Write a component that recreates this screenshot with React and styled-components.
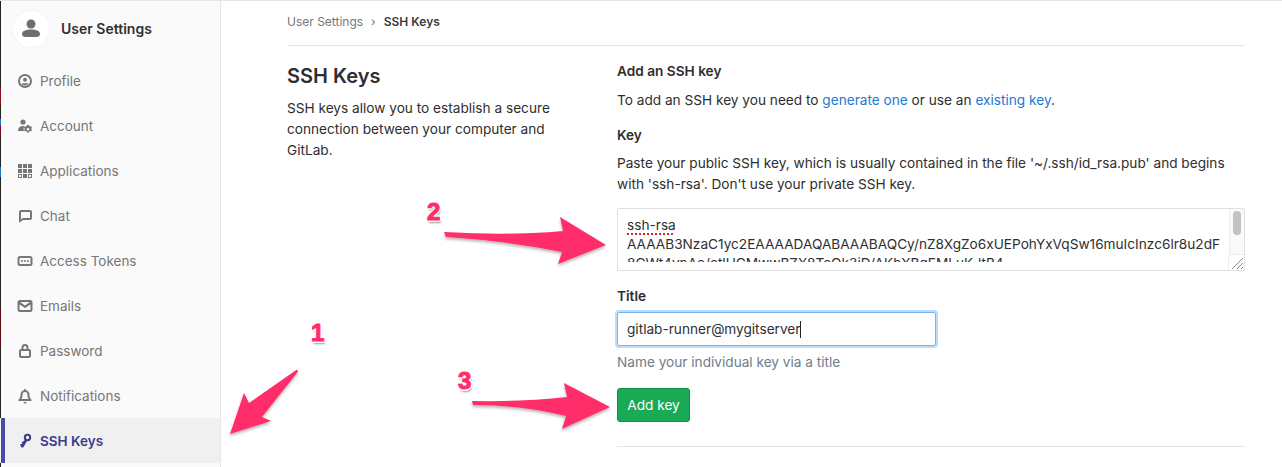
import React from 'react';
import styled, { createGlobalStyle } from 'styled-components';

const GlobalStyle = createGlobalStyle`
  html, body {
    margin: 0;
    background: #fff;
    font-family: Inter, "Liberation Sans", sans-serif;
    font-size: 13.65px;
    color: #2e2e2e;
  }
`;

const Page = styled.div`
  position: relative;
  display: flex;
  width: 1282px;
  height: 467px;
  overflow: hidden;
  border-top: 1px solid #e5e5e5;
  box-sizing: border-box;
`;

// sliver of the window behind, visible at the far left
const EdgeStrip = styled.div`
  flex: 0 0 1px;
  background: linear-gradient(
    #222 0 87px, #8a0f1a 87px 104px, #222 104px 118px, #1b78c8 118px 124px, #7a0f18 124px 134px,
    #222 134px 166px, #1b78c8 166px 176px, #222 176px 306px, #5c0a12 306px 346px, #222 346px 417px,
    #fafafa 417px 462px, #222 462px
  );
`;

const Sidebar = styled.aside`
  flex: 0 0 220px;
  box-sizing: border-box;
  background: #fafafa;
  border-right: 1px solid #e5e5e5;
`;

const SidebarHeader = styled.div`
  display: flex;
  align-items: center;
  gap: 11px;
  height: 57px;
  padding-left: 11px;
  padding-bottom: 2px;
  box-sizing: border-box;
  font-weight: 600;
  font-size: 14px;
  color: #303030;
`;

const Avatar = styled.div`
  display: flex;
  align-items: center;
  justify-content: center;
  width: 38px;
  height: 38px;
  border-radius: 50%;
  background: #fff;
  border: 1px solid #f5f5f5;
  box-sizing: border-box;
`;

const NavItem = styled.div`
  display: flex;
  align-items: center;
  gap: 7px;
  height: 45px;
  box-sizing: border-box;
  padding-left: ${(props) => (props.$active ? '12px' : '16px')};
  border-left: ${(props) => (props.$active ? '4px solid #4b4ba3' : 'none')};
  background: ${(props) => (props.$active ? '#f0f0f0' : 'transparent')};
  color: ${(props) => (props.$active ? '#3a3a8c' : '#767676')};
  font-weight: ${(props) => (props.$active ? 600 : 400)};
  font-size: 13.5px;

  svg {
    flex: 0 0 16px;
    fill: currentColor;
  }
`;

const Main = styled.main`
  flex: 1;
  min-width: 0;
  padding: 0 37px 0 66px;
`;

const Breadcrumb = styled.div`
  display: flex;
  align-items: center;
  gap: 8px;
  height: 40px;
  padding-bottom: 4px;
  border-bottom: 1px solid #e5e5e5;
  font-size: 12px;
  color: #767676;
`;

const CrumbCurrent = styled.span`
  font-weight: 600;
  color: #3a3a3a;
`;

const Columns = styled.div`
  display: grid;
  grid-template-columns: 330px minmax(0, 1fr);
`;

const Intro = styled.section`
  padding-top: 16px;
`;

const PageTitle = styled.h4`
  margin: 0 0 8px;
  font-size: 20px;
  line-height: 28px;
  font-weight: 600;
  color: #2e2e2e;
`;

const IntroText = styled.p`
  margin: 0;
  width: 270px;
  line-height: 21px;
`;

const Form = styled.section`
  padding-top: 15px;
`;

const Label = styled.div`
  font-weight: 600;
  line-height: 20px;
  margin-bottom: ${(props) => props.$mb || 0}px;
  margin-top: ${(props) => props.$mt || 0}px;
`;

const Text = styled.p`
  margin: ${(props) => props.$mt || 0}px 0 0;
  line-height: 21px;
`;

const Link = styled.a`
  color: #1f78d1;
`;

const KeyField = styled.div`
  position: relative;
  height: 63px;
  margin-top: 13px;
  padding: 7px 12px 7px 9px;
  box-sizing: border-box;
  border: 1px solid #dfdfdf;
  border-radius: 2px;
`;

const KeyText = styled.div`
  height: 46px;
  overflow: hidden;
  line-height: 19px;
  white-space: nowrap;
  color: #303030;
`;

const Misspelled = styled.span`
  text-decoration: underline dotted #d8232a 2px;
  text-underline-offset: 3px;
`;

const ScrollTrack = styled.div`
  position: absolute;
  top: 0;
  right: 0;
  bottom: 0;
  width: 14px;
  background: #fafafa;
  border-left: 1px solid #ececec;
`;

const ScrollThumb = styled.div`
  width: 8px;
  height: 24px;
  margin: 2px 0 0 3px;
  border-radius: 4px;
  background: #c2c2c2;
`;

const ResizeGrip = styled.svg`
  position: absolute;
  right: 0;
  bottom: 0;
  background: #fff;
  border-left: 1px solid #ececec;
  border-top: 1px solid #ececec;
`;

const TitleInput = styled.div`
  display: flex;
  align-items: center;
  width: 319px;
  height: 34px;
  margin-top: 6px;
  padding-left: 9px;
  box-sizing: border-box;
  border: 1px solid #73b6f5;
  box-shadow: 0 0 0 2px #bcdcfb;
  border-radius: 2px;
  color: #303030;
`;

const Caret = styled.span`
  display: inline-block;
  width: 1px;
  height: 17px;
  background: #222;
`;

const Hint = styled.div`
  margin-top: 6px;
  line-height: 21px;
  color: #707d8a;
`;

const AddButton = styled.button`
  display: block;
  width: 73px;
  height: 34px;
  margin-top: 15px;
  padding: 0;
  border: 1px solid #168f48;
  border-radius: 3px;
  background: #1aaa55;
  color: #fff;
  font: 400 13.65px Inter, "Liberation Sans", sans-serif;
`;

const Divider = styled.hr`
  margin: 24px 0 0;
  border: 0;
  border-top: 1px solid #e5e5e5;
`;

const ArrowLayer = styled.svg`
  position: absolute;
  left: 0;
  top: -1px;
  pointer-events: none;
`;

const Callout = styled.span`
  position: absolute;
  left: ${(props) => props.$x}px;
  top: ${(props) => props.$y}px;
  font: 700 24px/28px "Liberation Sans", sans-serif;
  color: #ff2d6a;
  -webkit-text-stroke: 1px #ff2d6a;
  text-shadow: -2px 0 #fff, 2px 0 #fff, 0 -2px #fff, 0 2px #fff, -1px -1px #fff, 1px -1px #fff, -1px 1px #fff,
    1px 1px #fff, 1px 3px 2px rgba(0, 0, 0, 0.4);
`;

const ProfileIcon = () => (
  <svg width="16" height="16" viewBox="0 0 16 16">
    <path fillRule="evenodd" d="M8 1a7 7 0 1 1 0 14A7 7 0 0 1 8 1zm0 2a5 5 0 1 0 0 10A5 5 0 0 0 8 3z" />
    <circle cx="8" cy="6.800" r="2" />
    <path d="M4.800 10.200h6.400v.6c-.8 1-2 1.600-3.200 1.600s-2.400-.6-3.200-1.600z" />
  </svg>
);

const AccountIcon = () => (
  <svg width="16" height="16" viewBox="0 0 16 16">
    <circle cx="6" cy="4" r="2.600" />
    <path d="M1 12.500C1 9.800 3 8 6 8c.5 0 1 .1 1.400.2-.9 1-1.100 3-.2 4.800H1.500z" />
    <path fillRule="evenodd" d="M11 7l1 .1.300 1 .9.500 1-.3.800 1-.6.900v1.100l.6.900-.8 1-1-.3-.9.500-.3 1h-2l-.3-1-.9-.5-1 .3-.8-1 .6-.9v-1.100l-.6-.9.800-1 1 .3.900-.5.300-1zm0 3a1.300 1.300 0 1 0 0 2.600 1.300 1.300 0 0 0 0-2.600z" />
  </svg>
);

const AppsIcon = () => (
  <svg width="16" height="16" viewBox="0 0 16 16">
    <path d="M1 1h4v4H1zM6 1h4v4H6zM11 1h4v4h-4zM6 6h4v4H6zM1 6h4v4H1zM11 6h4v4h-4zM6 11h4v4H6z" />
    <path fillRule="evenodd" d="M1 11h4v4H1zm1 1v2h2v-2zM11 11h4v4h-4zm1 1v2h2v-2z" />
  </svg>
);

const ChatIcon = () => (
  <svg width="16" height="16" viewBox="0 0 16 16">
    <path fillRule="evenodd" d="M4 2h9a2 2 0 0 1 2 2v6a2 2 0 0 1-2 2H6l-3.400 2.600A1 1 0 0 1 2 14V4a2 2 0 0 1 2-2zm0 2v7.500L5.500 10H13V4z" />
  </svg>
);

const TokenIcon = () => (
  <svg width="16" height="16" viewBox="0 0 16 16">
    <path fillRule="evenodd" d="M3 3h10a2.500 2.500 0 0 1 2.500 2.500v5A2.500 2.500 0 0 1 13 13H3a2.500 2.500 0 0 1-2.500-2.500v-5A2.500 2.500 0 0 1 3 3zm0 2a.5.5 0 0 0-.5.5v5c0 .3.200.5.500.5h10a.5.5 0 0 0 .5-.5v-5a.5.5 0 0 0-.5-.5z" />
    <circle cx="5" cy="8" r="1" />
    <circle cx="8" cy="8" r="1" />
    <circle cx="11" cy="8" r="1" />
  </svg>
);

const MailIcon = () => (
  <svg width="16" height="16" viewBox="0 0 16 16">
    <path fillRule="evenodd" d="M3 2h10a2.500 2.500 0 0 1 2.500 2.500v7A2.500 2.500 0 0 1 13 14H3a2.500 2.500 0 0 1-2.500-2.500v-7A2.500 2.500 0 0 1 3 2zm-.5 4.400v5.100c0 .3.200.5.500.5h10a.5.5 0 0 0 .5-.5V6.400L8 10zm.6-2.400L8 7.600 12.900 4z" />
  </svg>
);

const LockIcon = () => (
  <svg width="16" height="16" viewBox="0 0 16 16">
    <path fillRule="evenodd" d="M8 1a3.500 3.500 0 0 1 3.500 3.500V6h.5a2 2 0 0 1 2 2v5a2 2 0 0 1-2 2H4a2 2 0 0 1-2-2V8a2 2 0 0 1 2-2h.5V4.500A3.500 3.500 0 0 1 8 1zm0 2a1.500 1.500 0 0 0-1.500 1.500V6h3V4.500A1.500 1.500 0 0 0 8 3zM4 8v5h8V8z" />
  </svg>
);

const BellIcon = () => (
  <svg width="16" height="16" viewBox="0 0 16 16">
    <path fillRule="evenodd" d="M8 1c.6 0 1 .4 1 1v.2c2.300.5 3.500 2.400 3.500 4.800 0 2 .8 3.500 2 4.800.5.600.1 1.200-.6 1.200H2.100c-.7 0-1.100-.6-.6-1.200 1.200-1.300 2-2.800 2-4.800 0-2.400 1.200-4.300 3.500-4.800V2c0-.6.400-1 1-1zm0 3C6.300 4 5.500 5.300 5.500 7c0 1.600-.4 3-1.200 4h7.400c-.8-1-1.200-2.400-1.200-4 0-1.700-.8-3-2.500-3z" />
    <path d="M6.500 14h3a1.500 1.500 0 0 1-3 0z" />
  </svg>
);

const KeyIcon = () => (
  <svg width="16" height="16" viewBox="0 0 16 16">
    <circle cx="10.500" cy="4.500" r="2.700" fill="none" stroke="currentColor" strokeWidth="2" />
    <path d="M8.200 6.800l1.800 1.200-3.800 6.500H4.500l-.8-.9.500-1.100H3l.4-1.400h1.500l.6-1.200H4.200z" />
  </svg>
);

const navItems = [
  { label: 'Profile', icon: ProfileIcon },
  { label: 'Account', icon: AccountIcon },
  { label: 'Applications', icon: AppsIcon },
  { label: 'Chat', icon: ChatIcon },
  { label: 'Access Tokens', icon: TokenIcon },
  { label: 'Emails', icon: MailIcon },
  { label: 'Password', icon: LockIcon },
  { label: 'Notifications', icon: BellIcon },
  { label: 'SSH Keys', icon: KeyIcon, active: true },
];

const App = () => (
  <>
    <GlobalStyle />
    <Page>
      <EdgeStrip />
      <Sidebar>
        <SidebarHeader>
          <Avatar>
            <svg width="20" height="20" viewBox="0 0 20 20" fill="#6e6e6e">
              <circle cx="10" cy="5" r="4.500" />
              <path d="M1 15c0-3 3.500-4.500 9-4.500s9 1.500 9 4.500c0 2-1.500 3-3.500 3h-11C2.500 18 1 17 1 15z" />
            </svg>
          </Avatar>
          User Settings
        </SidebarHeader>
        {navItems.map(({ label, icon: Icon, active }) => (
          <NavItem key={label} $active={active}>
            <Icon />
            {label}
          </NavItem>
        ))}
      </Sidebar>
      <Main>
        <Breadcrumb>
          <span>User Settings</span>
          <span>›</span>
          <CrumbCurrent>SSH Keys</CrumbCurrent>
        </Breadcrumb>
        <Columns>
          <Intro>
            <PageTitle>SSH Keys</PageTitle>
            <IntroText>
              SSH keys allow you to establish a secure connection between your computer and GitLab.
            </IntroText>
          </Intro>
          <Form>
            <Label>Add an SSH key</Label>
            <Text $mt={9}>
              To add an SSH key you need to <Link>generate one</Link> or use an <Link>existing key</Link>.
            </Text>
            <Label $mt={14} $mb={8}>Key</Label>
            <Text>
              Paste your public SSH key, which is usually contained in the file '~/.ssh/id_rsa.pub' and begins
              <br />
              with 'ssh-rsa'. Don't use your private SSH key.
            </Text>
            <KeyField>
              <KeyText>
                <Misspelled>ssh-rsa</Misspelled>
                <br />
                AAAAB3NzaC1yc2EAAAADAQABAAABAQCy/nZ8XgZo6xUEPohYxVqSw16muIcInzc6lr8u2dF
                <br />
                8CWt4vnAe/etlUCMwwBZX8TeOk3jD/AKhXBgFMLuK-ltB4
              </KeyText>
              <ScrollTrack>
                <ScrollThumb />
              </ScrollTrack>
              <ResizeGrip width="15" height="15" viewBox="0 0 15 15" stroke="#8a8a8a" strokeWidth="1">
                <path d="M3 14L14 3M8 14l6-6M12 14l2-2" />
              </ResizeGrip>
            </KeyField>
            <Label $mt={15}>Title</Label>
            <TitleInput>
              gitlab-runner@mygitserver
              <Caret />
            </TitleInput>
            <Hint>Name your individual key via a title</Hint>
            <AddButton>Add key</AddButton>
            <Divider />
          </Form>
        </Columns>
      </Main>
      <ArrowLayer width="1282" height="467" viewBox="0 0 1282 467" fill="#ff2d6a">
        <defs>
          <filter id="arrowShadow" x="-10%" y="-20%" width="120%" height="140%">
            <feDropShadow dx="0" dy="2" stdDeviation="1.500" floodColor="#000" floodOpacity="0.3" />
          </filter>
        </defs>
        <g filter="url(#arrowShadow)">
          <path d="M297 369.500L298 371.500 262 417 271 421 230 434 244 393 249 403z" />
          <path d="M444 232Q510 236 563 231L560 217 606 245 558 264 562 252Q500 240 446 237Z" />
          <path d="M472 401Q525 402 567 397L564 383 610 407 562 429 566 416Q520 405 473 405Z" />
        </g>
      </ArrowLayer>
      <Callout $x={311} $y={318}>1</Callout>
      <Callout $x={427} $y={197}>2</Callout>
      <Callout $x={458} $y={366}>3</Callout>
    </Page>
  </>
);

export default App;
